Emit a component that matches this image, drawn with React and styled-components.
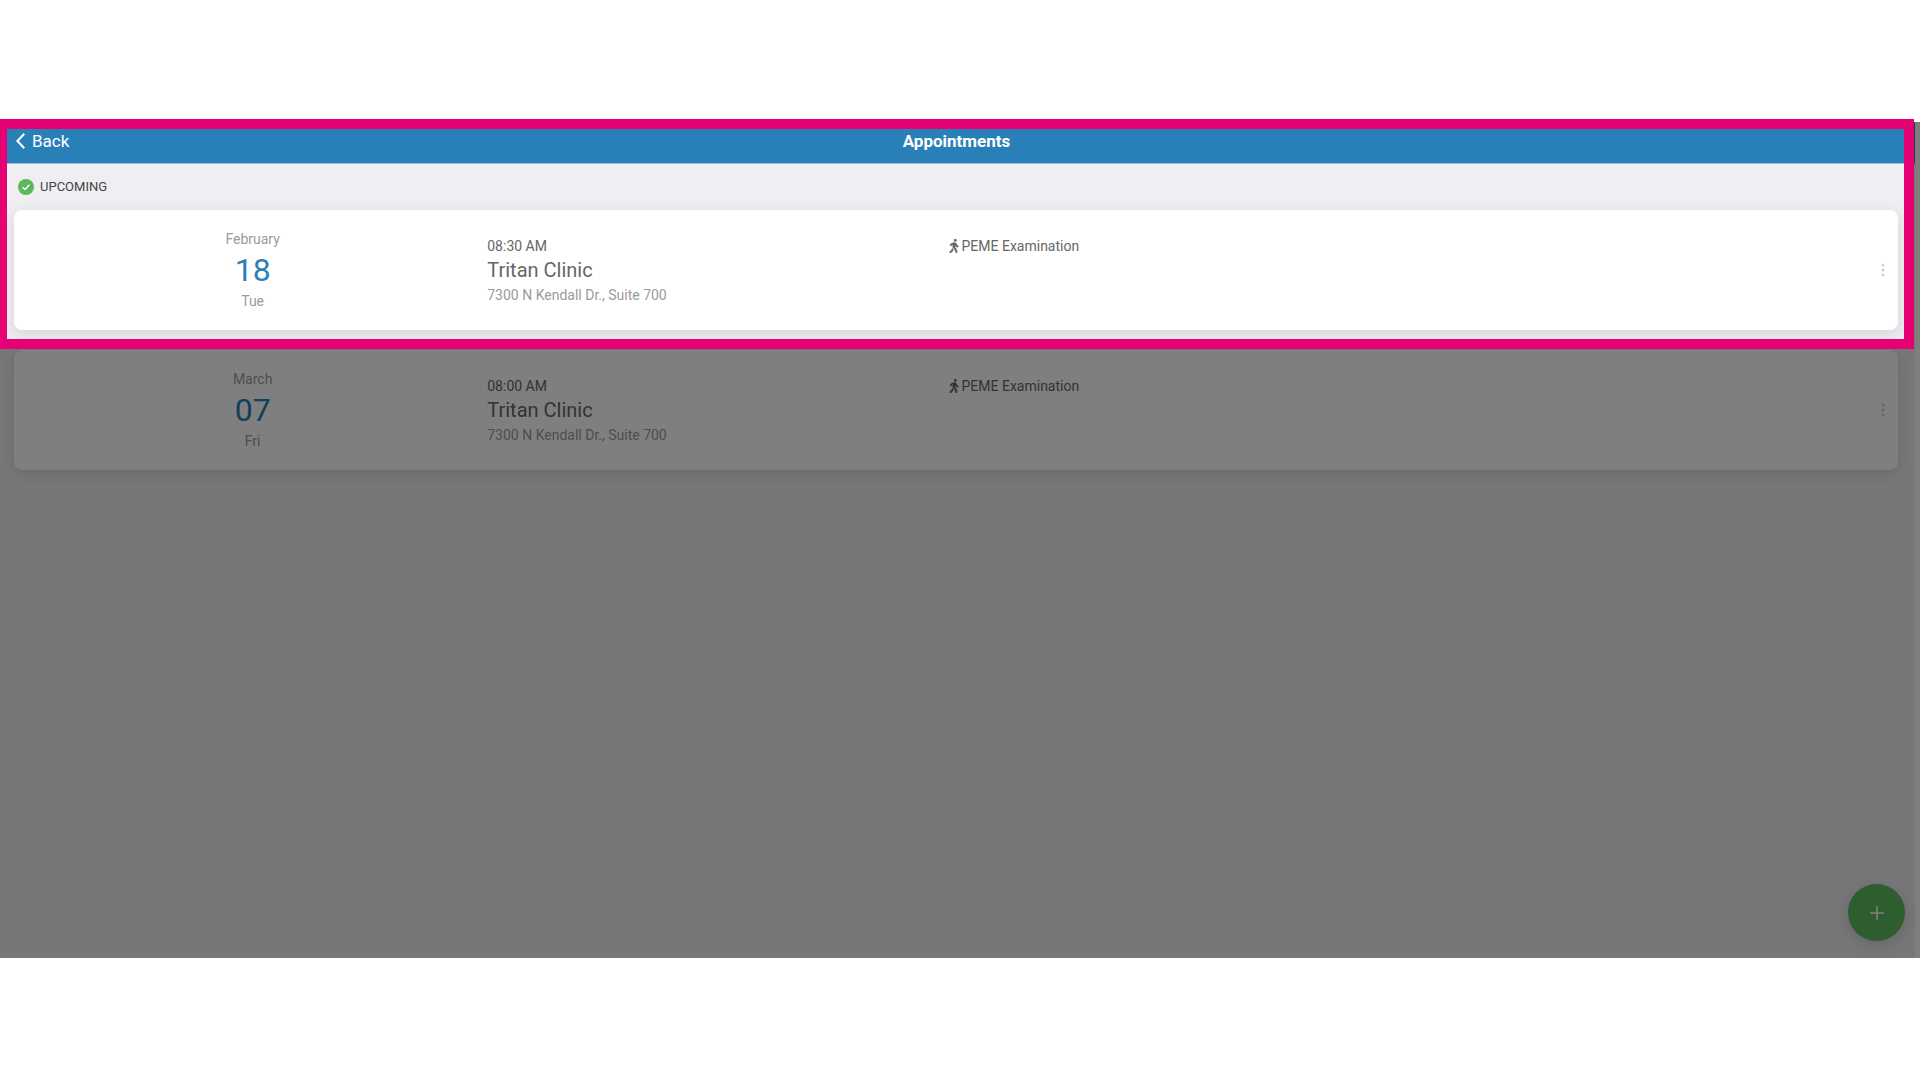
import React from "react";
import styled, { createGlobalStyle } from "styled-components";
import { FaWalking } from "react-icons/fa";

const GlobalStyle = createGlobalStyle`
  * { box-sizing: border-box; }
  body {
    margin: 0;
    background: #fff;
    font-family: Roboto, "Liberation Sans", sans-serif;
    font-size: 14px;
    line-height: 20px;
  }
  button { font: inherit; border: 0; padding: 0; background: none; cursor: pointer; }
  h1, h2, h3, p { margin: 0; font: inherit; }
`;

const Page = styled.div`
  min-height: 100vh;
  padding: 122px 0;
  display: flex;
  flex-direction: column;
`;

const Screen = styled.div`
  position: relative;
  flex: 1;
  display: flex;
  flex-direction: column;
  background: #efeef3;
  border-right: 5px solid #fdfcfa;
`;

const Header = styled.header`
  display: grid;
  grid-template-columns: 1fr auto 1fr;
  align-items: center;
  padding: 9px 18px 12px 16px;
  background: #2980b9;
  border-bottom: 1px solid #a9bdcd;
  color: #fff;
  font-size: 17px;
`;

const BackButton = styled.button`
  justify-self: start;
  display: flex;
  align-items: center;
  gap: 7px;
  color: #fff;
`;

const Title = styled.h1`
  font-weight: 700;
`;

const SectionTitle = styled.h2`
  display: flex;
  align-items: center;
  gap: 6px;
  padding: 13px 18px;
  font-size: 13px;
  color: #444;
`;

const List = styled.main`
  display: flex;
  flex-direction: column;
  gap: 20px;
  padding: 0 17px 20px 14px;
`;

const Card = styled.article`
  display: grid;
  grid-template-columns: repeat(4, 1fr) 31px;
  padding: 19px 0 19px 8px;
  background: #fff;
  border-radius: 8px;
  box-shadow: 0 4px 16px rgba(0, 0, 0, 0.12);
`;

const DateBlock = styled.div`
  text-align: center;
  color: #9b9b9b;
`;

const Day = styled.p`
  font-size: 32px;
  line-height: 42px;
  color: #2980b9;
`;

const Details = styled.div`
  padding: 7px 4px 0;
  color: #666;
`;

const Clinic = styled.h3`
  font-size: 20px;
  line-height: 29px;
`;

const Address = styled.p`
  color: #9b9b9b;
`;

const Exam = styled.p`
  display: flex;
  align-items: center;
  gap: 3px;
`;

const WalkIcon = styled(FaWalking)`
  width: 10px;
  height: 14px;
  stroke: currentColor;
  stroke-width: 12px;
`;

const MenuButton = styled.button`
  display: grid;
  place-items: center;
  color: #d0d0d0;
`;

const AddButton = styled.button`
  position: absolute;
  right: 10px;
  bottom: 17px;
  width: 57px;
  height: 57px;
  display: grid;
  place-items: center;
  border-radius: 50%;
  background: #5cbb5e;
  box-shadow: 0 4px 16px rgba(0, 0, 0, 0.16);
`;

const Backdrop = styled.div`
  position: absolute;
  inset: 0 -5px 0 0;
  overflow: hidden;
  pointer-events: none;
`;

const Spotlight = styled.div`
  height: 222px;
  margin-right: 8px;
  box-shadow: 0 0 0 4000px rgba(0, 0, 0, 0.5);
`;

const Ring = styled.div`
  position: absolute;
  top: -3px;
  left: -3px;
  right: 1px;
  height: 230px;
  border: 10px solid #e50073;
  pointer-events: none;
`;

const appointments = [
  { month: "February", day: "18", weekday: "Tue", time: "08:30 AM" },
  { month: "March", day: "07", weekday: "Fri", time: "08:00 AM" },
];

function Appointment({ month, day, weekday, time }) {
  return (
    <Card>
      <DateBlock>
        <p>{month}</p>
        <Day>{day}</Day>
        <p>{weekday}</p>
      </DateBlock>
      <Details>
        <p>{time}</p>
        <Clinic>Tritan Clinic</Clinic>
        <Address>7300 N Kendall Dr., Suite 700</Address>
      </Details>
      <Details>
        <Exam>
          <WalkIcon />
          PEME Examination
        </Exam>
      </Details>
      <div />
      <MenuButton aria-label="More options">
        <svg width="4" height="14" viewBox="0 0 4 14" fill="currentColor">
          <circle cx="2" cy="2" r="1.5" />
          <circle cx="2" cy="7" r="1.5" />
          <circle cx="2" cy="12" r="1.5" />
        </svg>
      </MenuButton>
    </Card>
  );
}

export default function App() {
  return (
    <Page>
      <GlobalStyle />
      <Screen>
        <Header>
          <BackButton>
            <svg width="9" height="16" viewBox="0 0 9 16" fill="none" stroke="currentColor" strokeWidth="2">
              <path d="M8.3 0.8 1.4 8l6.9 7.2" />
            </svg>
            Back
          </BackButton>
          <Title>Appointments</Title>
        </Header>
        <SectionTitle>
          <svg width="16" height="16" viewBox="0 0 16 16" fill="none">
            <circle cx="8" cy="8" r="8" fill="#5cb85c" />
            <path d="M4.6 8.2 7 10.4l4.4-4.6" stroke="#fff" strokeWidth="1.4" />
          </svg>
          UPCOMING
        </SectionTitle>
        <List>
          {appointments.map((a) => (
            <Appointment key={a.month} {...a} />
          ))}
        </List>
        <AddButton aria-label="Add appointment">
          <svg width="14" height="14" viewBox="0 0 14 14" stroke="#fff" strokeWidth="1.6">
            <path d="M7 0v14M0 7h14" />
          </svg>
        </AddButton>
        <Backdrop>
          <Spotlight />
        </Backdrop>
        <Ring />
      </Screen>
    </Page>
  );
}
